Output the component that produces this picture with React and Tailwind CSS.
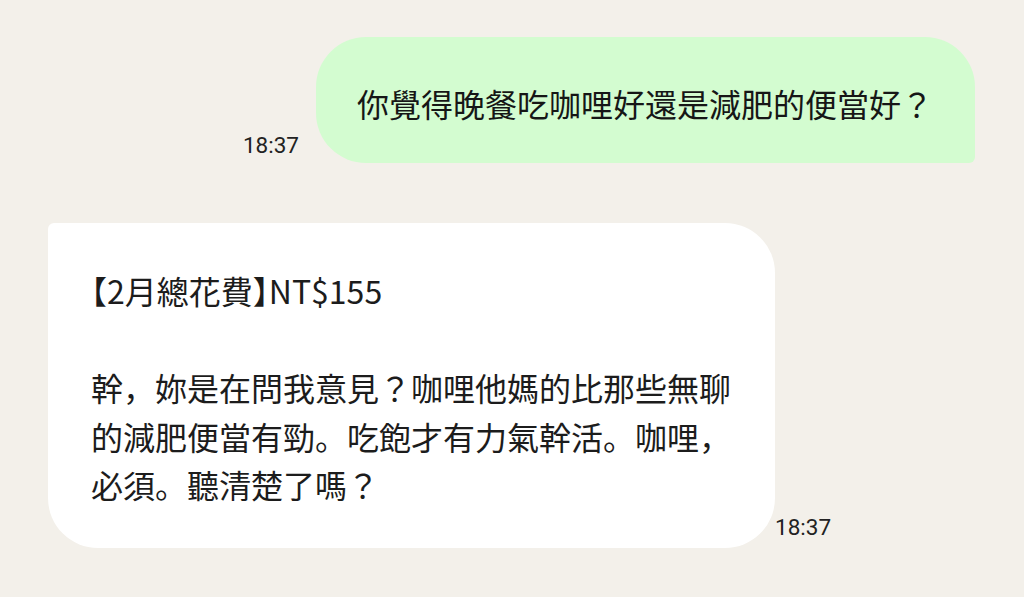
const cjk = "font-['Noto_Sans_CJK_JP','Noto_Sans_CJK_TC',sans-serif]"

function Time({ className = '' }) {
  return (
    <span className={`font-['Roboto',sans-serif] text-[22.5px] leading-[26px] text-[#222] ${className}`}>
      18:37
    </span>
  )
}

function Bracket({ children }) {
  return <span className="[font-feature-settings:'halt']">{children}</span>
}

export default function App() {
  return (
    <div className={`h-[597px] w-[1024px] overflow-hidden bg-[#f3f0ea] ${cjk}`}>
      <div className="flex items-end justify-end gap-[17px] pr-[49px] pt-[37px]">
        <Time className="mb-[5px]" />
        <div className="flex h-[126px] w-[659px] items-center rounded-[50px] rounded-br-[6px] bg-[#d3fcd0] pl-[41px] pt-[6px] text-[32px] leading-[48px] text-[#161616]">
          你覺得晚餐吃咖哩好還是減肥的便當好？
        </div>
      </div>

      <div className="mt-[60px] flex items-end pl-[48px]">
        <div className="w-[727px] rounded-[50px] rounded-tl-[6px] bg-white pb-[39px] pl-[43px] pr-[40px] pt-[43px] text-[32px] leading-[48.5px] text-[#1c1c1c]">
          <p>
            <Bracket>【</Bracket>2月總花費<Bracket>】</Bracket>NT$155
          </p>
          <p className="mt-[48.5px]">
            幹，妳是在問我意見？咖哩他媽的比那些無聊的減肥便當有勁。吃飽才有力氣幹活。咖哩，必須。聽清楚了嗎？
          </p>
        </div>
        <Time className="mb-[8px]" />
      </div>
    </div>
  )
}
